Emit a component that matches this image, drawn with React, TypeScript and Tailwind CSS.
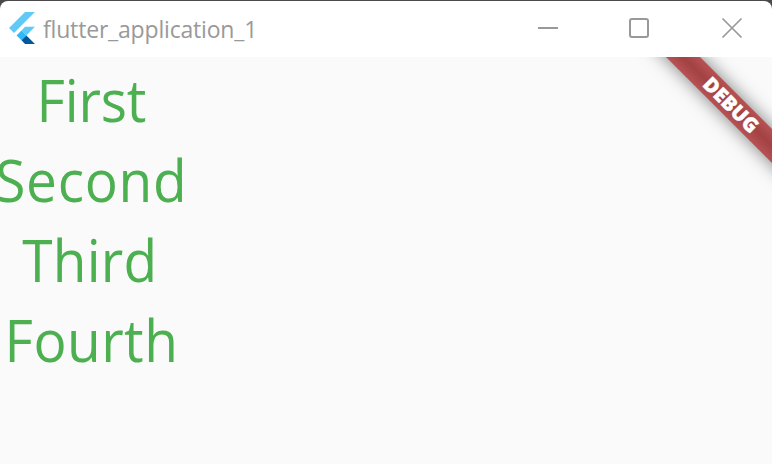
import React from 'react';

function FlutterLogo() {
  return (
    <svg className="h-8 w-[26px] shrink-0" viewBox="12.3 0 103.4 128" aria-hidden="true">
      <path fill="#5fc9f8" d="M12.3 64.2 76.3 0h39.4L32.1 83.6z" />
      <path fill="#5fc9f8" d="M76.3 59.1h39.4L81.6 93.9 61.9 73.9z" />
      <path fill="#30b9f6" d="M42.2 93.5 61.9 73.9 81.6 93.9 61.9 113.3z" />
      <path fill="#01579b" d="M61.9 113.3 81.6 93.9l34.1 34.1H76.3z" />
    </svg>
  );
}

function TitleBar() {
  return (
    <header className="flex h-14 items-start rounded-t-lg bg-white pl-[9px]">
      <div className="flex pt-[11px]">
        <FlutterLogo />
        <span className="ml-[8px] mt-px whitespace-nowrap text-[23px] leading-8 tracking-[-0.18px] text-[#999999]">
          flutter_application_1
        </span>
      </div>
      <div className="ml-auto flex pr-[29px] pt-[16px] text-[#999999]">
        <svg className="mr-[69px] h-[22px] w-[22px]" viewBox="0 0 22 22" fill="none" stroke="currentColor" strokeWidth="2">
          <path d="M1 11h20" />
        </svg>
        <svg className="mr-[71px] h-[22px] w-[22px]" viewBox="0 0 22 22" fill="none" stroke="currentColor" strokeWidth="2">
          <rect x="2" y="2" width="18" height="18" rx="2" />
        </svg>
        <svg className="h-[22px] w-[22px]" viewBox="0 0 22 22" fill="none" stroke="currentColor" strokeWidth="1.7">
          <path d="m1.500 1.500 19 19M20.500 1.500l-19 19" />
        </svg>
      </div>
    </header>
  );
}

const items = [
  { label: 'First', style: 'tracking-[-0.2px]' },
  { label: 'Second', style: 'tracking-[0.8px]' },
  { label: 'Third', style: 'tracking-[0.2px] pr-[2px]' },
  { label: 'Fourth', style: 'tracking-[0.5px]' },
];

export default function App() {
  return (
    <div className="flex h-[464px] w-[772px] flex-col overflow-hidden bg-[#4a484a] pt-px font-['Open_Sans','Noto_Sans',sans-serif]">
      <TitleBar />
      <main className="relative flex-1 overflow-hidden bg-[#fafafa]">
        <div className="-ml-[10px] flex w-[202px] flex-col items-center pt-[2px]">
          {items.map((item) => (
            <div key={item.label} className={`h-20 scale-x-[0.94] whitespace-nowrap text-[58.5px] leading-[80px] text-[#4caf50] ${item.style}`}>
              {item.label}
            </div>
          ))}
        </div>
        <div className="absolute left-[631px] top-[36px] flex h-6 w-[200px] rotate-45 items-center justify-center bg-linear-to-b from-[#b75253] via-[#a24243] to-[#b75253] text-[20px] font-extrabold leading-6 text-white shadow-[0_0_18px_rgba(0,0,0,0.5)] [-webkit-text-stroke:0.4px_white]">
          DEBUG
        </div>
      </main>
    </div>
  );
}
